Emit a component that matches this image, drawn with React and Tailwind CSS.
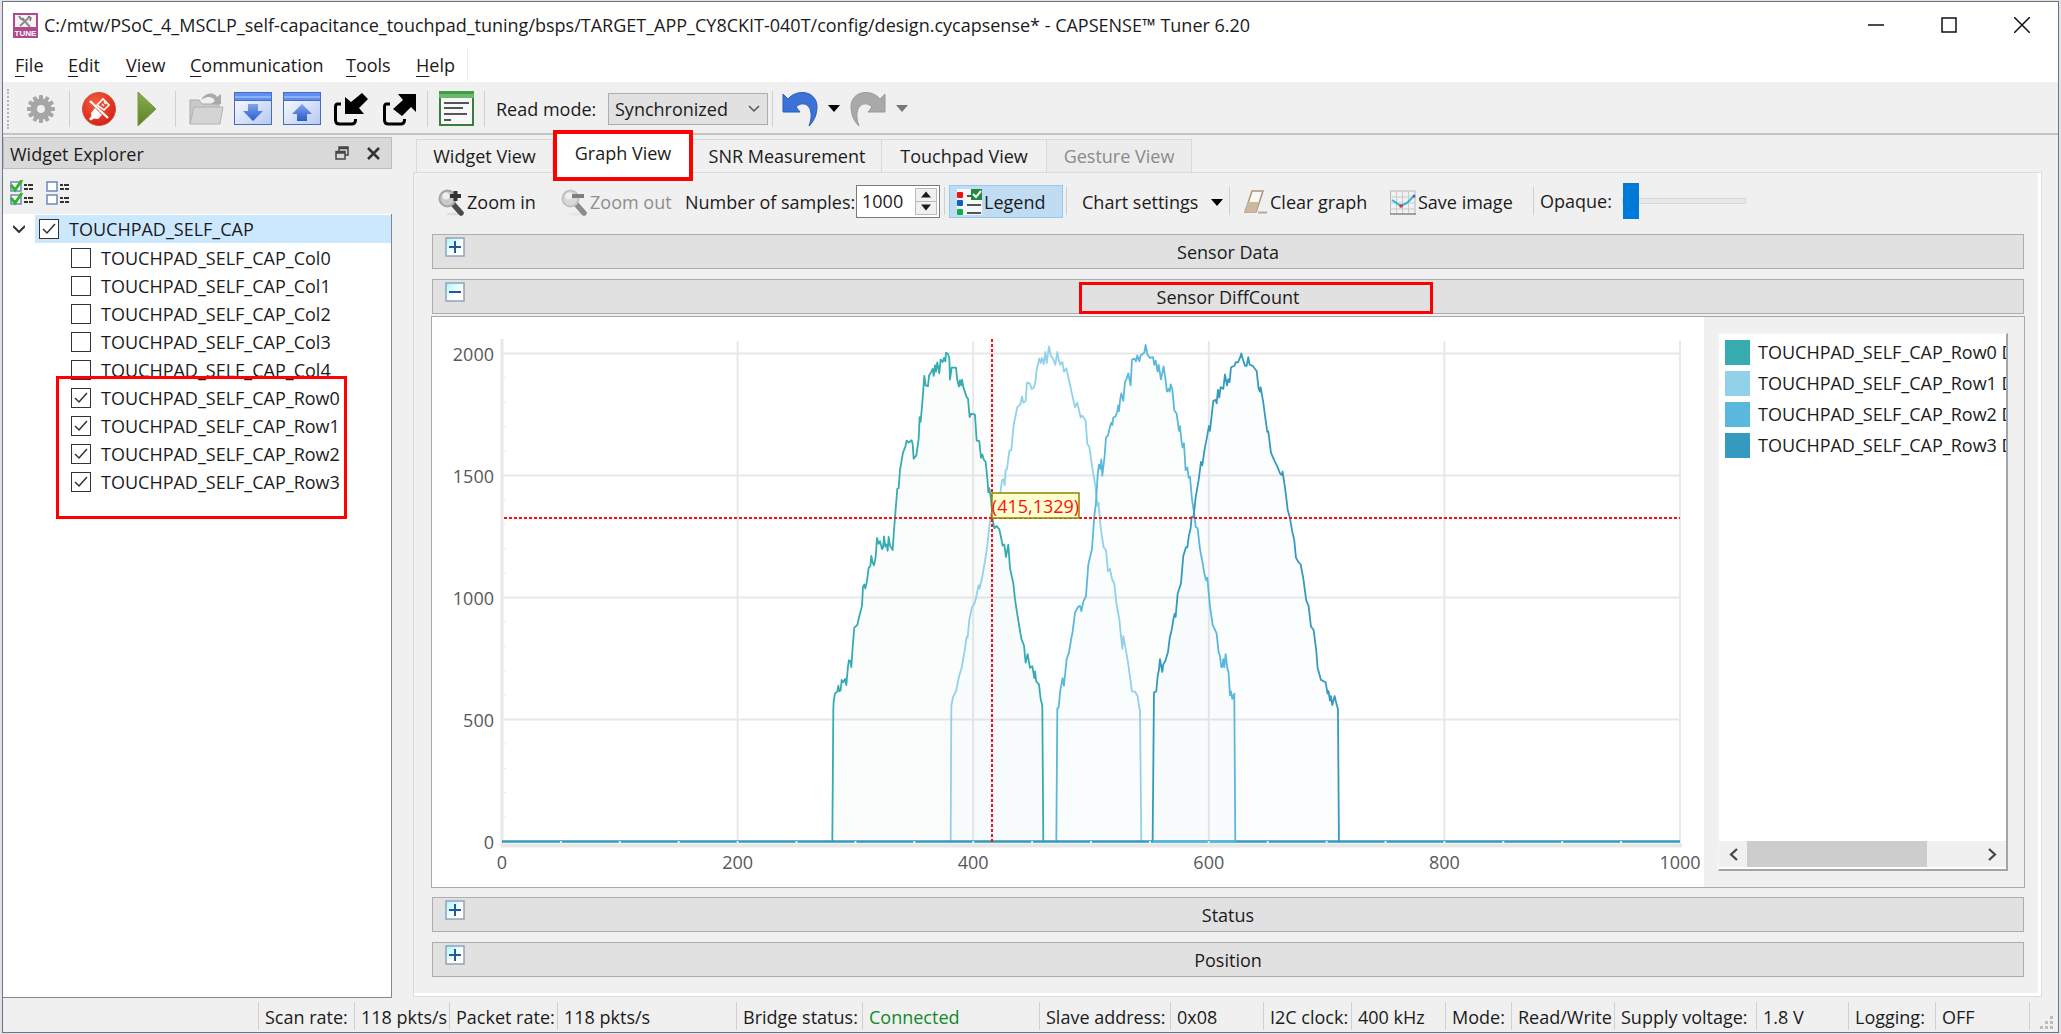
import React from "react";

const seriesData = [
  {
    name: "Row0",
    color: "#36abb0",
    points:
      "97,1514 100,1130 101,1108 105,1085 112,1078 115,1062 118,1078 122,1075 125,1045 130,1052 135,1042 139,1060 144,1005 147,988 151,990 154,1008 158,950 163,893 172,885 178,860 186,830 189,775 193,768 196,780 201,757 206,720 211,715 214,685 218,705 222,712 227,688 231,633 236,650 240,642 246,665 249,662 252,628 256,658 260,652 263,670 266,630 270,655 278,668 282,610 287,550 292,490 296,488 300,435 309,385 316,368 320,350 326,356 335,349 338,360 341,403 349,393 356,345 359,282 362,295 367,240 373,162 377,190 384,192 387,162 394,150 398,142 401,162 405,132 408,150 412,123 418,155 422,115 428,122 432,110 436,120 438,95 444,98 448,112 450,173 455,138 468,138 472,175 477,193 480,175 484,190 486,173 490,195 500,224 504,228 509,282 514,272 525,275 530,350 538,352 543,400 547,390 551,405 557,412 563,470 565,500 568,488 573,520 578,580 583,605 590,598 598,608 603,630 608,655 613,652 618,688 625,652 630,720 640,765 645,810 652,855 658,890 664,925 672,945 677,995 683,970 690,1010 697,1005 703,1040 705,1020 709,1050 717,1058 722,1100 727,1120 730,1514",
  },
  {
    name: "Row1",
    color: "#92d1ea",
    points:
      "452,1514 454,1120 459,1095 468,1078 477,1035 485,1010 494,960 500,920 503,922 508,870 516,835 525,820 536,770 539,780 547,745 555,700 562,655 568,600 573,565 580,540 590,525 600,510 606,465 611,463 614,480 617,435 621,433 628,380 634,378 641,305 652,253 661,245 666,222 670,240 677,235 681,182 690,185 695,200 701,198 706,182 710,145 718,112 722,125 726,110 731,128 736,93 740,125 747,77 753,105 758,110 766,130 772,93 776,115 781,130 787,122 792,150 799,140 806,170 815,210 825,253 832,240 842,283 847,278 857,292 862,360 868,368 877,430 886,480 892,540 896,530 898,560 903,610 911,660 918,668 924,730 930,722 936,752 943,765 949,820 958,870 967,955 970,918 978,960 985,1000 996,1078 1006,1080 1013,1092 1018,1128 1020,1130 1024,1514",
  },
  {
    name: "Row2",
    color: "#5ab8dc",
    points:
      "769,1514 772,1128 776,1125 781,1075 788,1040 792,1062 800,985 807,965 813,930 818,905 825,850 835,832 840,830 844,845 850,818 858,802 865,710 876,665 883,570 888,530 893,450 897,420 901,432 904,405 907,452 914,395 918,342 924,335 930,310 934,298 937,305 940,283 947,280 952,265 955,248 957,265 960,235 964,213 970,235 975,180 980,170 985,155 992,190 996,115 1004,112 1008,120 1012,103 1018,120 1022,103 1033,95 1037,72 1042,100 1050,110 1059,108 1063,130 1067,118 1073,150 1076,130 1083,172 1091,135 1097,175 1101,208 1106,200 1109,208 1112,187 1117,200 1123,262 1130,272 1137,322 1140,308 1145,355 1148,370 1152,358 1157,436 1162,428 1166,458 1170,455 1176,520 1183,565 1187,600 1193,605 1200,665 1207,700 1213,735 1218,755 1222,748 1230,830 1238,885 1250,910 1256,965 1260,975 1264,1008 1267,1008 1270,985 1273,1008 1277,970 1282,1010 1286,1025 1290,1090 1293,1078 1297,1100 1303,1085 1306,1514",
  },
  {
    name: "Row3",
    color: "#369ac0",
    points:
      "1058,1514 1062,1082 1069,1078 1073,1035 1077,1015 1080,985 1087,1022 1090,1000 1096,990 1104,965 1109,925 1115,900 1121,865 1124,853 1127,862 1133,795 1143,765 1150,685 1158,660 1162,660 1167,625 1172,605 1175,572 1181,572 1187,515 1196,465 1203,412 1207,422 1214,375 1220,345 1227,308 1230,322 1240,235 1247,232 1250,242 1254,203 1258,225 1262,195 1270,200 1275,158 1281,190 1285,172 1289,180 1293,138 1303,133 1308,122 1314,123 1320,110 1324,97 1328,112 1335,133 1340,133 1345,108 1349,130 1358,133 1370,148 1376,200 1380,208 1382,195 1390,240 1397,290 1402,325 1405,323 1413,385 1424,410 1432,425 1440,445 1445,450 1448,440 1457,500 1463,550 1470,575 1476,610 1483,640 1488,690 1495,702 1502,710 1510,750 1519,815 1526,830 1533,890 1541,900 1549,960 1553,1010 1563,1045 1577,1052 1583,1085 1586,1078 1590,1105 1593,1092 1597,1118 1604,1092 1608,1108 1614,1130 1617,1514",
  },
];

/* ---------- icons ---------- */

function AppIcon() {
  return (
    <svg width="25" height="25" viewBox="0 0 25 25" aria-hidden="true">
      <rect x="1" y="1" width="23" height="23" fill="#f4f2f3" stroke="#b04a8e" strokeWidth="2" />
      <path d="M7 13L17 3.5M17 14L9 5" stroke="#8c8c8c" strokeWidth="2" />
      <path d="M6 3l2 3 3 1M15 3l3 2-1 3" fill="none" stroke="#777" strokeWidth="1.5" />
      <rect x="1" y="14" width="23" height="10" fill="#b04a8e" />
      <text x="12.5" y="22.5" fontSize="8" fontWeight="700" fill="#fff" textAnchor="middle" fontFamily="Liberation Sans, sans-serif">
        TUNE
      </text>
    </svg>
  );
}

function GearIcon() {
  const teeth = [0, 30, 60, 90, 120, 150, 180, 210, 240, 270, 300, 330];
  return (
    <svg width="28" height="28" viewBox="0 0 28 28" aria-hidden="true">
      <g fill="#a6a6a6">
        {teeth.map((a) => (
          <rect key={a} x="12" y="0" width="4" height="7" rx="1" transform={`rotate(${a} 14 14)`} />
        ))}
      </g>
      <circle cx="14" cy="14" r="7.2" fill="none" stroke="#a6a6a6" strokeWidth="6.5" />
    </svg>
  );
}

function DisconnectIcon() {
  return (
    <svg width="34" height="34" viewBox="0 0 34 34" aria-hidden="true">
      <defs>
        <radialGradient id="stop" cx="0.4" cy="0.3" r="0.8">
          <stop offset="0" stopColor="#f2603f" />
          <stop offset="1" stopColor="#d8180f" />
        </radialGradient>
      </defs>
      <circle cx="17" cy="17" r="16.5" fill="url(#stop)" stroke="#c9564a" />
      <path d="M8 9L26 26" stroke="#fff" strokeWidth="2.4" />
      <path d="M15 13l6-6 6 6-5 5z" fill="none" stroke="#fff" strokeWidth="1.6" />
      <path d="M20 12l2 2M22 10l2 2" stroke="#fff" strokeWidth="1.4" />
      <path d="M7 27l2.500-3-.5-3 4-5 7 7-4 4-4-.5-3 2z" fill="#fff" />
    </svg>
  );
}

function PlayIcon() {
  return (
    <svg width="20" height="36" viewBox="0 0 20 36" aria-hidden="true">
      <defs>
        <linearGradient id="play" x1="0" x2="0" y1="0" y2="1">
          <stop offset="0" stopColor="#8aab55" />
          <stop offset="1" stopColor="#5c8420" />
        </linearGradient>
      </defs>
      <path d="M1 1L19 18 1 35z" fill="url(#play)" stroke="#7a9a45" />
    </svg>
  );
}

function FolderIcon() {
  return (
    <svg width="36" height="34" viewBox="0 0 36 34" aria-hidden="true">
      <path d="M2 32V8h9l3 4h17v4" fill="#c9c9c9" stroke="#a9a9a9" />
      <path d="M2 32L6 15h29l-3 17z" fill="#d4d4d4" stroke="#b2b2b2" />
      <path d="M13 8C17 0 27 0 29 5l4-3v10H23l4-3c-2-5-8-5-14-1z" fill="#a9a9a9" />
    </svg>
  );
}

function TransferIcon({ up }) {
  return (
    <svg width="38" height="33" viewBox="0 0 38 33" aria-hidden="true">
      <defs>
        <linearGradient id="panel" x1="0" x2="1" y1="0" y2="1">
          <stop offset="0" stopColor="#fff" />
          <stop offset="1" stopColor="#b5c9f3" />
        </linearGradient>
        <linearGradient id="arrow" x1="0" x2="0" y1="0" y2="1">
          <stop offset="0" stopColor="#7fa3ec" />
          <stop offset="1" stopColor="#2a5cc9" />
        </linearGradient>
      </defs>
      <rect x="0.5" y="0.5" width="37" height="32" fill="url(#panel)" stroke="#4a6bb8" />
      <rect x="1" y="1" width="36" height="7" fill="#5f8ff0" />
      <rect x="1" y="4" width="36" height="2" fill="#8cb0fa" />
      <rect x="1" y="8" width="36" height="1" fill="#4a6bb8" />
      <path d={up ? "M19 12l10 10h-5v7h-10v-7H9z" : "M14 12h10v7h5L19 29 9 19h5z"} fill="url(#arrow)" />
    </svg>
  );
}

function ImportIcon() {
  return (
    <svg width="34" height="34" viewBox="0 0 34 34" aria-hidden="true">
      <path d="M7 12H3.500Q1.500 12 1.500 15V28q0 4 4 4H18q3 0 3.500-3.500V27" fill="none" stroke="#000" strokeWidth="3" />
      <path d="M28 1l6 6-9 9 5 6H11V5l6 5z" fill="#000" />
    </svg>
  );
}

function ExportIcon() {
  return (
    <svg width="34" height="34" viewBox="0 0 34 34" aria-hidden="true">
      <path d="M7 12H3.500Q1.500 12 1.500 15V28q0 4 4 4H18q3 0 3.500-3.500V27" fill="none" stroke="#000" strokeWidth="3" />
      <path d="M15 2h18v18l-5-5-9 9-9-7 10-9z" fill="#000" />
    </svg>
  );
}

function LogIcon() {
  return (
    <svg width="35" height="35" viewBox="0 0 35 35" aria-hidden="true">
      <rect x="1" y="1" width="33" height="33" fill="#f8f8f8" stroke="#3a7d3f" strokeWidth="2" />
      <rect x="0" y="0" width="35" height="7" fill="#6cb86c" />
      <rect x="0" y="0" width="35" height="3" fill="#3fa043" />
      <path d="M5 12h25M5 17h19M5 23h23M5 29h7" stroke="#555" strokeWidth="2.200" />
    </svg>
  );
}

function UndoIcon({ redo }) {
  return (
    <svg width="36" height="36" viewBox="0 0 36 36" aria-hidden="true" className={redo ? "-scale-x-100" : ""}>
      <path
        d="M1 3l5 5C14-2 34-1 35 15c0 9-3 15-8 20 3-8 3-16-1-20-3-3-8-3-12 1l4 5H1z"
        fill={redo ? "#a9a9a9" : "#3a72d8"}
        stroke={redo ? "#999" : "#2b5cb8"}
      />
    </svg>
  );
}

function Caret({ className = "text-black" }) {
  return (
    <svg width="12" height="7" viewBox="0 0 12 7" aria-hidden="true" className={className}>
      <path d="M0 0h12L6 7z" fill="currentColor" />
    </svg>
  );
}

function CheckListIcon({ checked }) {
  return (
    <svg width="26" height="26" viewBox="0 0 26 26" aria-hidden="true">
      {[2, 15].map((y) => (
        <g key={y}>
          <rect x="2" y={y} width="10" height="9" fill="#fff" stroke="#6f87b5" strokeWidth="1.500" />
          {checked && <path d={`M2 ${y + 3}l4 5L13 ${y - 2}`} fill="none" stroke="#2db52d" strokeWidth="3" />}
          <path d={`M15 ${y + 3}h3m1 0h5M15 ${y + 7}h4m1 0h4`} stroke="#333" strokeWidth="2" />
        </g>
      ))}
    </svg>
  );
}

function ZoomIcon({ minus }) {
  return (
    <svg width="27" height="27" viewBox="0 0 27 27" aria-hidden="true" className={minus ? "opacity-60" : ""}>
      <ellipse cx="17" cy="25" rx="9" ry="1.500" fill="#ddd" />
      <path d="M15 15l8 9" stroke="#4a4a4a" strokeWidth="5.500" strokeLinecap="round" />
      <circle cx="9.500" cy="9.500" r="8" fill="#c9c9c9" stroke="#a3a3a3" strokeWidth="2" />
      <circle cx="8" cy="7" r="3.500" fill="#efefef" />
      <path d={minus ? "M11 7h12" : "M12 7h11M17.500 2v10"} stroke="#333" strokeWidth="4" />
    </svg>
  );
}

function LegendIcon() {
  return (
    <svg width="26" height="26" viewBox="0 0 26 26" aria-hidden="true">
      <rect x="1" y="0" width="25" height="26" fill="#f4f8fb" />
      <rect x="1" y="3" width="6" height="6" rx="1" fill="#f01010" />
      <rect x="1" y="11" width="6" height="6" rx="1" fill="#1060c0" />
      <rect x="1" y="20" width="6" height="6" rx="1" fill="#10b040" />
      <path d="M11 7h8M11 16h14M11 24h14" stroke="#555" strokeWidth="2" />
      <rect x="15" y="0" width="11" height="11" fill="#1f8a3a" />
      <path d="M17 5l3 3 5-6" fill="none" stroke="#fff" strokeWidth="2" />
    </svg>
  );
}

function EraserIcon() {
  return (
    <svg width="25" height="25" viewBox="0 0 25 25" aria-hidden="true">
      <path d="M9 1h11l-7 21H2z" fill="#fbf8f4" stroke="#a89680" strokeWidth="1.500" />
      <path d="M5 12h11l-3 10H2z" fill="#cdb9a0" />
      <path d="M15 22.500h9" stroke="#b9aa96" strokeWidth="2" />
    </svg>
  );
}

function SaveImageIcon() {
  return (
    <svg width="26" height="25" viewBox="0 0 26 25" aria-hidden="true">
      <rect x="0.500" y="1" width="24.500" height="23" fill="#f1f1f1" stroke="#b9b9b9" />
      <path d="M6.500 1v23M12.500 1v23M18.500 1v23M0 7h25M0 13h25M0 19h25" stroke="#c9c9c9" />
      <path d="M2 10l9 6 6-3 7-7" fill="none" stroke="#2ab7dd" strokeWidth="2" />
      <circle cx="11" cy="16" r="1.800" fill="#e03030" />
      <circle cx="24" cy="6" r="1.500" fill="#4060d0" />
      <path d="M0 24h26" stroke="#8e8e8e" strokeWidth="1.500" />
    </svg>
  );
}

/* ---------- small parts ---------- */

function Sep({ className = "" }) {
  return <span className={"w-px shrink-0 bg-[#d0d0d0] " + className} />;
}

function Check({ id, label, defaultChecked, selected }) {
  return (
    <label htmlFor={id} className={"flex h-7 items-center gap-[10px] pl-1 " + (selected ? "flex-1 bg-[#cce8ff]" : "")}>
      <span className="grid size-5 shrink-0 place-items-center">
        <input
          id={id}
          type="checkbox"
          defaultChecked={defaultChecked}
          className="peer col-start-1 row-start-1 size-5 appearance-none border border-[#333] bg-white"
        />
        <svg width="14" height="12" viewBox="0 0 14 12" className="pointer-events-none invisible col-start-1 row-start-1 peer-checked:visible" aria-hidden="true">
          <path d="M1 6l4 4 8-9" fill="none" stroke="#333" strokeWidth="1.500" />
        </svg>
      </span>
      <span className="whitespace-nowrap">{label}</span>
    </label>
  );
}

function SectionBar({ title, open, highlight }) {
  return (
    <button type="button" className="flex h-[35px] w-full items-start border border-[#adadad] bg-[#e1e1e1] pl-3">
      <span className="mt-0.5 w-0">
        <svg width="20" height="20" viewBox="0 0 20 20" aria-hidden="true">
          <defs>
            <linearGradient id="toggle" x1="0" x2="1" y1="0" y2="1">
              <stop offset="0" stopColor="#a6f6ff" />
              <stop offset="0.600" stopColor="#fff" />
            </linearGradient>
          </defs>
          <rect x="1" y="1" width="18" height="18" fill="url(#toggle)" stroke="#93a3bb" strokeWidth="1.500" />
          <path d={open ? "M4 10h12" : "M4 10h12M10 4v12"} stroke="#1f5c96" strokeWidth="2" />
        </svg>
      </span>
      <span className="relative flex-1 self-center pr-3 text-center">
        {title}
        {highlight && (
          <span className="absolute -top-[3px] left-[634px] h-8 w-[354px] border-[3px] border-[#fe0000]" />
        )}
      </span>
    </button>
  );
}

const xs = [0, 200, 400, 600, 800, 1000];
const ys = [0, 500, 1000, 1500, 2000];
const px = (v) => 70 + v * 1.178;
const py = (v) => 524.5 - v * 0.244;

function Chart() {
  const minorY = Array.from({ length: 20 }, (_, i) => (i + 1) * 100);
  const minorX = Array.from({ length: 19 }, (_, i) => (i + 1) * 50);
  return (
    <svg viewBox="0 0 1272 569" preserveAspectRatio="xMidYMin meet" className="h-full w-full" role="img" aria-label="Sensor DiffCount">
      <g stroke="#e8e8e8" strokeWidth="2">
        {xs.map((v) => (
          <path key={v} d={`M${px(v)} 24V528`} />
        ))}
        {ys.map((v) => (
          <path key={v} d={`M70 ${py(v)}H1248`} />
        ))}
        {minorY.map((v) => (
          <path key={v} strokeWidth="1" d={`M70 ${py(v)}h4`} />
        ))}
        <path d="M69 528.500H1250" strokeWidth="4" />
        <path d="M70 22V530" strokeWidth="3" />
      </g>
      <g transform="translate(368 3) scale(.3333 .3444)" strokeWidth="1.800">
        {seriesData.map((s) => (
          <polygon key={s.name} points={s.points} fill={s.color} fillOpacity="0.02" />
        ))}
        {seriesData.map((s) => (
          <polyline
            key={s.name}
            points={s.points}
            fill="none"
            stroke={s.color}
            vectorEffect="non-scaling-stroke"
            strokeLinejoin="round"
          />
        ))}
      </g>
      <path d="M70 524.500H1248" stroke="#369ac0" strokeWidth="2.500" />
      <path d="M721 524.500H804" stroke="#5ab8dc" strokeWidth="2.500" />
      {minorX.map((v) => (
        <path key={v} d={`M${px(v)} 524v2`} stroke="#e8f2f6" strokeWidth="2" />
      ))}
      <g stroke="#fe1010" strokeWidth="2" strokeDasharray="3 2">
        <path d="M72 201H1248" />
        <path d="M560 22V527" />
      </g>
      <rect x="560" y="176" width="87" height="25" fill="#ffffd0" stroke="#888800" strokeWidth="1.500" />
      <g fontSize="18" fill="#585858">
        <text x="603.500" y="196" textAnchor="middle" fill="#fe1010">
          (415,1329)
        </text>
        {ys.map((v) => (
          <text key={v} x="62" y={py(v) + 7} textAnchor="end">
            {v}
          </text>
        ))}
        {xs.map((v) => (
          <text key={v} x={px(v)} y="552" textAnchor="middle">
            {v}
          </text>
        ))}
      </g>
    </svg>
  );
}

/* ---------- page ---------- */

const menus = [
  ["File", "w-[53px]"],
  ["Edit", "w-[58px]"],
  ["View", "w-16"],
  ["Communication", "w-[156px]"],
  ["Tools", "w-[70px]"],
  ["Help", "w-[51px]"],
];

const statusItems = [
  ["Scan rate:", "w-24"],
  ["118 pkts/s", "w-[95px]"],
  ["Packet rate:", "w-[108px]"],
  ["118 pkts/s", "w-[179px]"],
  ["Bridge status:", "w-[126px]"],
  ["Connected", "w-[177px] text-[#118a2c]"],
  ["Slave address:", "w-[131px]"],
  ["0x08", "w-[93px]"],
  ["I2C clock:", "w-[88px]"],
  ["400 kHz", "w-[94px]"],
  ["Mode:", "w-[66px]"],
  ["Read/Write", "w-[103px]"],
  ["Supply voltage:", "w-[142px]"],
  ["1.8 V", "w-[92px]"],
  ["Logging:", "w-[87px]"],
  ["OFF", "w-[94px]"],
];

const tabCls = "h-[33px] shrink-0 border-t border-r border-[#d9d9d9] text-center";

export default function App() {
  return (
    <div className="min-h-screen bg-[#dfe2e6] px-[2px] py-px font-['Open_Sans','Noto_Sans',sans-serif] text-[18px] leading-6 text-[#1b1b1b]">
      <div className="flex min-h-[calc(100vh-2px)] flex-col border border-[#6b7480] bg-[#f0f0f0]">
        <header className="flex h-[46px] items-center bg-white pl-[10px]">
          <AppIcon />
          <h1 className="flex-1 pl-1.5 whitespace-nowrap">
            C:/mtw/PSoC_4_MSCLP_self-capacitance_touchpad_tuning/bsps/TARGET_APP_CY8CKIT-040T/config/design.cycapsense* - CAPSENSE™ Tuner 6.20
          </h1>
          <div className="flex">
            <button type="button" aria-label="Minimize" className="flex h-10 w-[73px] items-center justify-center">
              <svg width="16" height="16" viewBox="0 0 16 16"><path d="M0 8h16" stroke="#111" strokeWidth="1.500" /></svg>
            </button>
            <button type="button" aria-label="Maximize" className="flex h-10 w-[73px] items-center justify-center">
              <svg width="16" height="16" viewBox="0 0 16 16"><path d="M1 1h14v14H1z" fill="none" stroke="#111" strokeWidth="1.500" /></svg>
            </button>
            <button type="button" aria-label="Close" className="flex h-10 w-[73px] items-center justify-center">
              <svg width="16" height="16" viewBox="0 0 16 16"><path d="M0 0l16 16M16 0L0 16" stroke="#111" strokeWidth="1.500" /></svg>
            </button>
          </div>
        </header>

        <nav className="flex h-[34px] items-center bg-white pl-3">
          {menus.map(([m, w]) => (
            <button key={m} type="button" className={"shrink-0 text-left " + w}>
              <span className="underline underline-offset-4">{m[0]}</span>
              {m.slice(1)}
            </button>
          ))}
          <Sep className="h-8 bg-[#ececec]" />
        </nav>

        <div className="flex h-[53px] items-center border-b-2 border-[#c3c3c3] pt-0.5">
          <span className="mr-[18px] ml-1 h-10 border-l-2 border-dotted border-[#b5b5b5]" />
          <button type="button" aria-label="Settings" className="w-[42px]"><GearIcon /></button>
          <Sep className="mr-[12px] h-9" />
          <button type="button" aria-label="Disconnect" className="w-[55px]"><DisconnectIcon /></button>
          <button type="button" aria-label="Start" className="w-[38px]"><PlayIcon /></button>
          <Sep className="mr-[12px] h-9" />
          <button type="button" aria-label="Open" className="w-[46px]"><FolderIcon /></button>
          <button type="button" aria-label="Read from device" className="w-[49px]"><TransferIcon /></button>
          <button type="button" aria-label="Write to device" className="w-[51px]"><TransferIcon up /></button>
          <button type="button" aria-label="Import" className="w-[49px]"><ImportIcon /></button>
          <button type="button" aria-label="Export" className="w-11"><ExportIcon /></button>
          <Sep className="mr-[11px] h-9" />
          <button type="button" aria-label="Log" className="w-[45px]"><LogIcon /></button>
          <Sep className="mr-[11px] h-9" />
          <label htmlFor="mode" className="w-28 shrink-0">Read mode:</label>
          <span className="grid w-40 shrink-0 items-center">
            <select id="mode" className="col-start-1 row-start-1 h-8 appearance-none border border-[#adadad] bg-[#e1e1e1] pl-[6px]">
              <option>Synchronized</option>
            </select>
            <svg width="12" height="8" viewBox="0 0 12 8" className="pointer-events-none col-start-1 row-start-1 mr-2 justify-self-end" aria-hidden="true">
              <path d="M1 1l5 5 5-5" fill="none" stroke="#555" strokeWidth="1.500" />
            </svg>
          </span>
          <Sep className="mr-[9px] ml-1 h-9" />
          <button type="button" aria-label="Undo" className="flex w-[68px] items-center gap-[10px]"><UndoIcon /><Caret /></button>
          <button type="button" aria-label="Redo" className="flex items-center gap-[10px]"><UndoIcon redo /><Caret className="text-[#777]" /></button>
        </div>

        <main className="flex flex-1">
          <aside className="flex w-[389px] shrink-0 flex-col pt-[2px] pb-px">
            <div className="flex h-8 items-center border border-[#bdbdbd] bg-[#d9d9d9] pl-1.5">
              <h2 className="flex-1 pt-0.5">Widget Explorer</h2>
              <button type="button" aria-label="Float" className="mr-[18px]">
                <svg width="14" height="14" viewBox="0 0 14 14" fill="none" stroke="#444" strokeWidth="1.500">
                  <path d="M4 5V1h9v8h-3M4 2.500h9" />
                  <path d="M1 5.500h9V13H1zM1 7h9" />
                </svg>
              </button>
              <button type="button" aria-label="Close panel" className="mr-[11px]">
                <svg width="13" height="13" viewBox="0 0 13 13"><path d="M1 1l11 11M12 1L1 12" stroke="#333" strokeWidth="2.500" /></svg>
              </button>
            </div>
            <div className="flex h-[45px] items-center gap-[10px] pt-0.5 pl-1.5">
              <button type="button" aria-label="Select all"><CheckListIcon checked /></button>
              <button type="button" aria-label="Clear all"><CheckListIcon /></button>
            </div>
            <div className="flex-1 border-r border-b border-[#828790] bg-white pt-px">
              <div className="flex items-center">
                <svg width="12" height="8" viewBox="0 0 12 8" className="mr-[10px] ml-[10px]" aria-hidden="true">
                  <path d="M0 1l6 6 6-6" fill="none" stroke="#333" strokeWidth="2" />
                </svg>
                <Check id="root" label="TOUCHPAD_SELF_CAP" defaultChecked selected />
              </div>
              <div className="pt-px pl-16">
                {[0, 1, 2, 3, 4].map((n) => (
                  <Check key={n} id={"col" + n} label={"TOUCHPAD_SELF_CAP_Col" + n} />
                ))}
              </div>
              <div className="relative pl-16">
                {[0, 1, 2, 3].map((n) => (
                  <Check key={n} id={"row" + n} label={"TOUCHPAD_SELF_CAP_Row" + n} defaultChecked />
                ))}
                <span className="pointer-events-none absolute -top-2 left-[53px] h-[143px] w-[291px] border-[3px] border-[#fe0000]" />
              </div>
            </div>
          </aside>

          <section className="mr-4 mb-0.5 ml-[21px] flex min-w-0 flex-1 flex-col">
            <div className="flex h-[37px] items-end pl-[3px]" role="tablist">
              <button type="button" role="tab" className={tabCls + " w-[137px] border-l"}>Widget View</button>
              <button type="button" role="tab" aria-selected="true" className="relative z-10 -mb-[9px] h-[51px] w-[140px] shrink-0 border-4 border-[#fe0000] bg-white pb-1.5">
                Graph View
              </button>
              <button type="button" role="tab" className={tabCls + " w-[189px]"}>SNR Measurement</button>
              <button type="button" role="tab" className={tabCls + " w-[165px]"}>Touchpad View</button>
              <button type="button" role="tab" className={tabCls + " w-[145px] bg-[#ececec] text-[#8a8a8a]"}>Gesture View</button>
            </div>

            <div className="flex flex-1 flex-col border border-[#dcdcdc] pr-[17px] pb-[19px] pl-[18px] shadow-[inset_-3px_-3px_0_#fff]">
              <div className="mb-[5px] flex h-14 items-center pl-1.5">
                <button type="button" className="flex w-[123px] shrink-0 items-center gap-0.5 pt-0.5"><ZoomIcon />Zoom in</button>
                <button type="button" className="flex w-[124px] shrink-0 items-center gap-0.5 pt-0.5 text-[#8e8e8e]"><ZoomIcon minus />Zoom out</button>
                <label htmlFor="samples" className="w-[171px] shrink-0 pt-0.5 whitespace-nowrap">Number of samples:</label>
                <span className="flex h-[33px] w-[84px] shrink-0 border border-[#7a7a7a] bg-white p-0.5">
                  <input id="samples" defaultValue="1000" className="w-14 min-w-0 flex-1 pl-[3px] outline-none" />
                  <span className="flex w-[22px] flex-col">
                    <button type="button" aria-label="More" className="flex flex-1 items-center justify-center border border-[#bbb] bg-[#f0f0f0]"><Caret className="w-[10px] rotate-180" /></button>
                    <button type="button" aria-label="Fewer" className="flex flex-1 items-center justify-center border border-t-0 border-[#bbb] bg-[#f0f0f0]"><Caret className="w-[10px]" /></button>
                  </span>
                </span>
                <Sep className="mx-1 h-7" />
                <button type="button" className="flex h-[33px] w-[114px] shrink-0 items-center gap-0.5 border border-[#90c8f6] bg-[#c0dcf3] pt-0.5 pl-1.5"><LegendIcon />Legend</button>
                <Sep className="mr-[15px] ml-[3px] h-7" />
                <button type="button" className="flex w-[147px] shrink-0 items-center justify-between pt-0.5 pr-1.5">Chart settings<Caret /></button>
                <Sep className="mr-[13px] h-7" />
                <button type="button" className="flex w-[147px] shrink-0 items-center gap-0.5 pt-0.5"><EraserIcon />Clear graph</button>
                <button type="button" className="flex w-[143px] shrink-0 items-center gap-0.5 pt-0.5"><SaveImageIcon />Save image</button>
                <Sep className="mr-[6px] h-7" />
                <label htmlFor="opaque" className="w-[82px] shrink-0">Opaque:</label>
                <input
                  id="opaque"
                  type="range"
                  defaultValue="0"
                  className="h-9 w-[124px] appearance-none bg-transparent [&::-webkit-slider-runnable-track]:h-1.5 [&::-webkit-slider-runnable-track]:border [&::-webkit-slider-runnable-track]:border-[#d6d6d6] [&::-webkit-slider-runnable-track]:bg-[#e7eaea] [&::-webkit-slider-thumb]:-mt-4 [&::-webkit-slider-thumb]:h-9 [&::-webkit-slider-thumb]:w-4 [&::-webkit-slider-thumb]:appearance-none [&::-webkit-slider-thumb]:bg-[#007ad9]"
                />
              </div>

              <SectionBar title="Sensor Data" />
              <div className="h-2.5" />
              <SectionBar title="Sensor DiffCount" open highlight />
              <div className="-mx-px mt-0.5 mb-[9px] flex flex-1 border border-[#a8a8a8] bg-white">
                <div className="min-w-0 flex-1"><Chart /></div>
                <div className="flex w-[320px] shrink-0 bg-[#f0f0f0] pt-4 pr-4 pb-4 pl-[14px]">
                  <div className="flex min-w-0 flex-1 flex-col border border-r-2 border-b-2 border-[#f6f6f6] border-r-[#a0a4ab] border-b-[#a0a4ab] bg-white pb-0.5">
                    <ul className="flex-1 overflow-hidden pt-1.5 pl-1.5">
                      {seriesData.map((s) => (
                        <li key={s.name} className="flex h-[31px] items-start gap-2">
                          <svg width="25" height="25" className="shrink-0" aria-hidden="true"><rect width="25" height="25" fill={s.color} /></svg>
                          <span className="min-w-0 flex-1 overflow-hidden whitespace-nowrap">TOUCHPAD_SELF_CAP_{s.name} D</span>
                        </li>
                      ))}
                    </ul>
                    <div className="flex h-[26px] items-center bg-[#f0f0f0]">
                      <button type="button" aria-label="Scroll left" className="flex w-7 justify-center">
                        <svg width="9" height="13" viewBox="0 0 9 13"><path d="M8 1L2 6.500 8 12" fill="none" stroke="#444" strokeWidth="2.200" /></svg>
                      </button>
                      <span className="flex h-full flex-1"><span className="h-full w-[78%] bg-[#cdcdcd]" /></span>
                      <button type="button" aria-label="Scroll right" className="flex w-7 justify-center">
                        <svg width="9" height="13" viewBox="0 0 9 13"><path d="M1 1l6 5.500L1 12" fill="none" stroke="#444" strokeWidth="2.200" /></svg>
                      </button>
                    </div>
                  </div>
                </div>
              </div>
              <SectionBar title="Status" />
              <div className="h-2.5" />
              <SectionBar title="Position" />
            </div>
          </section>
        </main>

        <footer className="flex h-[33px] items-center pl-[255px]">
          {statusItems.map(([t, w], i) => (
            <span key={i} className={"h-7 shrink-0 border-l border-[#d0d0d0] pt-[3px] pl-1.5 whitespace-nowrap " + w}>
              {t}
            </span>
          ))}
          <Sep className="h-7" />
          <svg width="14" height="14" viewBox="0 0 14 14" className="mr-1 mb-0.5 ml-auto self-end" fill="#bcbcbc" aria-hidden="true">
            <path d="M10 0h3v3h-3zM5 5h3v3H5zM10 5h3v3h-3zM0 10h3v3H0zM5 10h3v3H5zM10 10h3v3h-3z" />
          </svg>
        </footer>
      </div>
    </div>
  );
}
